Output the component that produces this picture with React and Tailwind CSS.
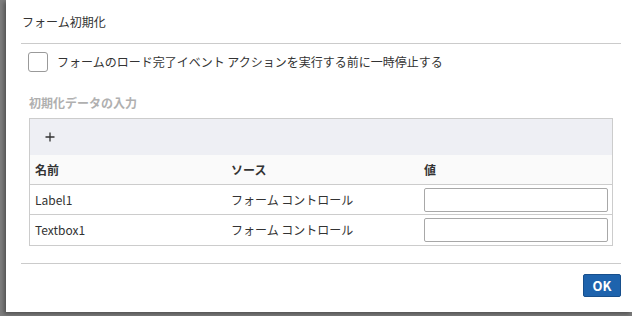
export default function App() {
  const font = { fontFamily: '"Noto Sans CJK JP", "Noto Sans", sans-serif' };
  const rows = [
    { name: 'Label1', source: 'フォーム コントロール' },
    { name: 'Textbox1', source: 'フォーム コントロール' },
  ];
  return (
    <div className="w-[632px] h-[316px] bg-[#7d7d7d] pl-[6px] overflow-hidden" style={font}>
      <div className="bg-white h-[312px] pl-[15px] pr-[11px] shadow-[-2px_2px_4px_rgba(0,0,0,0.35)] text-[12px] text-[#333]">
        <div className="h-[44px] border-b border-[#cbcbcb] flex items-center pl-[1px]">
          フォーム初期化
        </div>
        <div className="mt-[8px] flex items-center pl-[7px] h-[20px]">
          <div className="w-[20px] h-[20px] rounded-[3px] border border-[#9a9a9a] bg-white" />
          <span className="ml-[9px] leading-none">フォームのロード完了イベント アクションを実行する前に一時停止する</span>
        </div>
        <div className="mt-[22px] pl-[8px] font-bold text-[#b0b0b0] leading-[17px]">初期化データの入力</div>
        <div className="mt-[7px] mx-[8px] border border-[#cccccc]">
          <div className="h-[36px] bg-[#eeeff4] flex items-center pl-[15px]">
            <svg width="10" height="10" viewBox="0 0 10 10">
              <path d="M5 0.5V9.5M0.5 5H9.5" stroke="#333" strokeWidth="1.3" />
            </svg>
          </div>
          <div className="h-[30px] bg-[#fafafa] border-b border-[#cccccc] flex items-center font-bold">
            <div className="w-[195px] pl-[5px]">名前</div>
            <div className="w-[194px] pl-[6px]">ソース</div>
            <div className="flex-1 pl-[5px]">値</div>
          </div>
          {rows.map((r, i) => (
            <div
              key={r.name}
              className={`h-[30px] flex items-center ${i === 0 ? 'border-b border-[#cccccc]' : ''}`}
            >
              <div className="w-[195px] pl-[5px]">{r.name}</div>
              <div className="w-[194px] pl-[6px]">{r.source}</div>
              <div className="flex-1 pl-[5px] pr-[4px]">
                <div className="h-[24px] border border-[#a8a8a8] rounded-[2px] bg-white" />
              </div>
            </div>
          ))}
        </div>
        <div className="mt-[17px] border-t border-[#cbcbcb]" />
        <div className="flex justify-end mt-[10px]">
          <button className="w-[38px] h-[23px] bg-[#1e63ad] border border-[#174f8c] rounded-[2px] text-white font-bold text-[13px] leading-none flex items-center justify-center">
            OK
          </button>
        </div>
      </div>
    </div>
  );
}
